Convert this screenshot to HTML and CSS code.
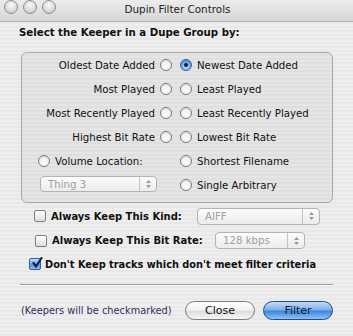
FILE: index.html
```html
<!DOCTYPE html>
<html lang="en">
<head>
    <meta charset="UTF-8">
    <title>Dupin Filter Controls</title>
    <link rel="stylesheet" href="styles.css">
</head>
<body>
    <div id="window">
        <div class="titlebar">
            <div class="lights">
                <span class="light"></span>
                <span class="light"></span>
                <span class="light"></span>
            </div>
            <div class="title">Dupin Filter Controls</div>
        </div>
        <div class="content">
            <h1 class="heading">Select the Keeper in a Dupe Group by:</h1>
            <div class="group">
                <div class="opt left">Oldest Date Added <span class="radio"></span></div>
                <div class="opt right"><span class="radio on"></span>Newest Date Added</div>
                <div class="opt left">Most Played <span class="radio"></span></div>
                <div class="opt right"><span class="radio"></span>Least Played</div>
                <div class="opt left">Most Recently Played <span class="radio"></span></div>
                <div class="opt right"><span class="radio"></span>Least Recently Played</div>
                <div class="opt left">Highest Bit Rate <span class="radio"></span></div>
                <div class="opt right"><span class="radio"></span>Lowest Bit Rate</div>
                <div class="opt volume"><span class="radio"></span>Volume Location:</div>
                <div class="opt right"><span class="radio"></span>Shortest Filename</div>
                <div class="opt volume-pop">
                    <div class="popup thing">
                        <span class="popup-text">Thing 3</span>
                        <span class="arrows"><svg width="7" height="10" viewBox="0 0 7 10"><path d="M3.5 1 L6 4 H1 Z M1 6 H6 L3.5 9 Z" fill="#9a9a9a"/></svg></span>
                    </div>
                </div>
                <div class="opt right"><span class="radio"></span>Single Arbitrary</div>
            </div>
            <div class="check-row row-kind">
                <span class="checkbox"></span>
                <span class="check-label">Always Keep This Kind:</span>
                <div class="popup kind">
                    <span class="popup-text">AIFF</span>
                    <span class="arrows"><svg width="7" height="10" viewBox="0 0 7 10"><path d="M3.5 1 L6 4 H1 Z M1 6 H6 L3.5 9 Z" fill="#9a9a9a"/></svg></span>
                </div>
            </div>
            <div class="check-row row-rate">
                <span class="checkbox"></span>
                <span class="check-label">Always Keep This Bit Rate:</span>
                <div class="popup rate">
                    <span class="popup-text">128 kbps</span>
                    <span class="arrows"><svg width="7" height="10" viewBox="0 0 7 10"><path d="M3.5 1 L6 4 H1 Z M1 6 H6 L3.5 9 Z" fill="#9a9a9a"/></svg></span>
                </div>
            </div>
            <div class="check-row row-meet">
                <span class="checkbox on"><svg width="12" height="12" viewBox="0 0 12 12"><path d="M2.5 6 L5 9.5 L10.5 1" fill="none" stroke="#10244a" stroke-width="2.2" stroke-linecap="round" stroke-linejoin="round"/></svg></span>
                <span class="check-label">Don't Keep tracks which don't meet filter criteria</span>
            </div>
            <div class="separator"></div>
            <div class="footer">
                <span class="note">(Keepers will be checkmarked)</span>
                <div class="buttons">
                    <div class="btn">Close</div>
                    <div class="btn default">Filter</div>
                </div>
            </div>
        </div>
    </div>
</body>
</html>
```

FILE: styles.css
```css
body {
    margin: 0;
    font-family: "DejaVu Sans", "Liberation Sans", sans-serif;
    font-size: 10.2px;
    color: #111;
}
#window {
    width: 353px;
    height: 336px;
    background: repeating-linear-gradient(to bottom, #eeeeee 0, #eeeeee 2px, #e8e8e8 2px, #e8e8e8 4px);
    overflow: hidden;
}
.titlebar {
    height: 22px;
    display: flex;
    align-items: center;
    background: linear-gradient(to bottom, #ececec, #d6d6d6);
    border-bottom: 1px solid #b4b4b4;
    box-sizing: border-box;
}
.lights {
    display: flex;
    gap: 5px;
    padding-left: 4px;
    margin-top: -7px;
}
.light {
    width: 12px;
    height: 12px;
    border-radius: 50%;
    border: 1px solid #8e8e8e;
    background: radial-gradient(circle at 50% 35%, #fafafa 0, #dcdcdc 55%, #b8b8b8 100%);
}
.title {
    flex: 1;
    text-align: center;
    font-size: 10.4px;
    color: #222;
    margin-top: -4px;
    margin-right: 54px;
}
.content {
    padding: 0 20px 0 21px;
}
.heading {
    margin: 3px 0 11px -2px;
    font-size: 10.2px;
    font-weight: bold;
    line-height: 16px;
}
.group {
    display: grid;
    grid-template-columns: 150px 1fr;
    column-gap: 8px;
    grid-auto-rows: 24px;
    padding-bottom: 5px;
    border: 1px solid #a9a9a9;
    border-radius: 6px;
    background: rgba(0, 0, 0, 0.035);
}
.opt {
    display: flex;
    align-items: center;
    white-space: nowrap;
}
.opt.left {
    justify-content: flex-end;
    gap: 5px;
}
.opt.right {
    gap: 5px;
}
.opt.volume {
    padding-left: 16px;
    gap: 5px;
}
.opt.volume-pop {
    padding-left: 18px;
    margin-top: -2px;
}
.radio {
    width: 12px;
    height: 12px;
    border-radius: 50%;
    border: 1px solid #7c7c7c;
    box-sizing: border-box;
    background: radial-gradient(circle at 50% 70%, #ffffff 0, #f2f2f2 50%, #cfcfcf 100%);
    flex-shrink: 0;
    position: relative;
}
.radio.on {
    border-color: #3d5f95;
    background: radial-gradient(circle at 50% 65%, #cfe6ff 0, #6aa4e8 55%, #2f6cc0 100%);
}
.radio.on::after {
    content: "";
    position: absolute;
    left: 3px;
    top: 3px;
    width: 4px;
    height: 4px;
    border-radius: 50%;
    background: #0d1b33;
}
.popup {
    display: flex;
    align-items: center;
    height: 16px;
    border: 1px solid #b3b3b3;
    border-radius: 4px;
    background: linear-gradient(to bottom, #fbfbfb, #ececec);
    box-sizing: border-box;
    color: #a0a0a0;
}
.popup-text {
    flex: 1;
    padding-left: 7px;
}
.arrows {
    width: 16px;
    height: 100%;
    border-left: 1px solid #c4c4c4;
    display: flex;
    align-items: center;
    justify-content: center;
}
.popup.thing {
    width: 117px;
}
.popup.kind {
    width: 123px;
    height: 17px;
}
.popup.rate {
    width: 90px;
    height: 17px;
}
.check-row {
    display: flex;
    align-items: center;
    height: 24px;
    white-space: nowrap;
}
.row-kind {
    margin-top: 1px;
    padding-left: 13px;
}
.row-rate {
    height: 25px;
    padding-left: 14px;
}
.row-meet {
    height: 20px;
    margin-top: 1px;
    padding-left: 8px;
}
.check-label {
    font-size: 10px;
    font-weight: bold;
    margin-left: 5px;
}
.row-kind .check-label {
    width: 146px;
}
.row-rate .check-label {
    width: 163px;
}
.row-meet .check-label {
    margin-left: 4px;
    font-size: 9.8px;
}
.checkbox {
    width: 12px;
    height: 12px;
    border: 1px solid #7f7f7f;
    border-radius: 2px;
    box-sizing: border-box;
    background: linear-gradient(to bottom, #ffffff, #dddddd);
    flex-shrink: 0;
    display: flex;
    align-items: center;
    justify-content: center;
}
.checkbox.on {
    border-color: #3b5c92;
    background: linear-gradient(to bottom, #c6e0ff, #5c98e2 60%, #8cbcf3);
}
.checkbox.on svg {
    margin-top: -3px;
    margin-right: -3px;
}
.separator {
    height: 1px;
    margin: 10px 0 0 -1px;
    background: #9c9c9c;
    border-bottom: 1px solid #f8f8f8;
}
.footer {
    display: flex;
    align-items: center;
    justify-content: space-between;
    padding-top: 15px;
}
.note {
    font-size: 9.8px;
    color: #2e2f63;
}
.buttons {
    display: flex;
    gap: 8px;
}
.btn {
    width: 70px;
    height: 19px;
    box-sizing: border-box;
    border: 1px solid #7d7d7d;
    border-radius: 10px;
    background: linear-gradient(to bottom, #ffffff 0, #f4f4f4 45%, #dedede 55%, #f6f6f6 100%);
    display: flex;
    align-items: center;
    justify-content: center;
    font-size: 11px;
}
.btn.default {
    border-color: #26497e;
    background: linear-gradient(to bottom, #c5ddf7 0, #7fb0ea 45%, #3e87dc 55%, #8cc3f6 100%);
    color: #0a1a33;
}
```
